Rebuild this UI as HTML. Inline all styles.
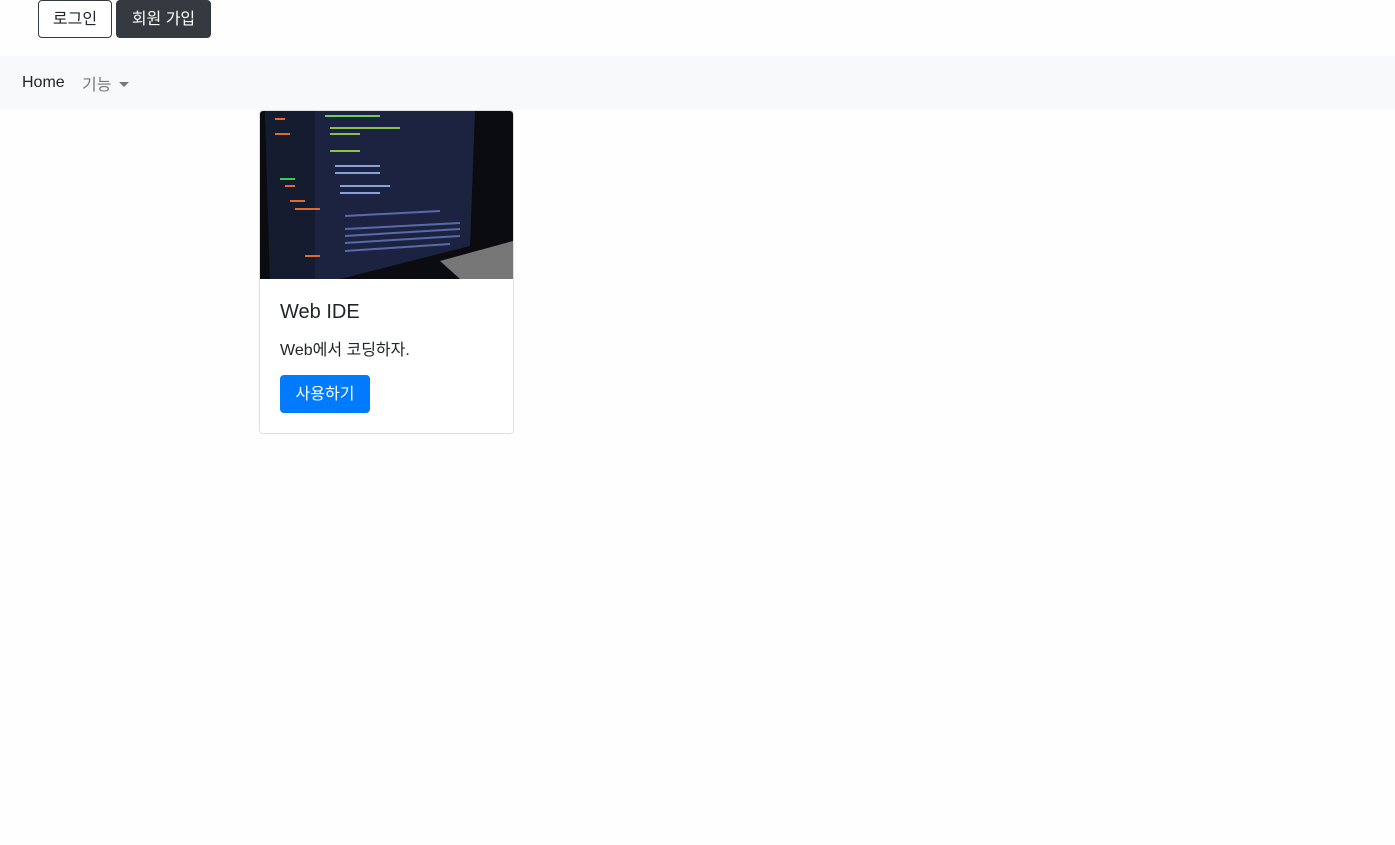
<!DOCTYPE html>
<html><head><meta charset="utf-8"><style>
*{box-sizing:border-box}
body{margin:0;background:#fefefe;font-family:"Liberation Sans","Noto Sans CJK KR",sans-serif;font-size:16px;color:#212529;width:1395px;height:845px;position:relative;overflow:hidden}
.btn{position:absolute;top:0;height:38px;border-radius:4px;font-size:16px;line-height:38px;text-align:center}
.b1{left:38px;width:74px;border:1px solid #343a40;background:#fff;color:#212529}
.b2{left:116px;width:95px;border:1px solid #343a40;background:#343a40;color:#fff}
.nav{position:absolute;top:56px;left:0;width:1395px;height:54px;background:#f8f9fa}
.nav span{position:absolute;top:17px;font-size:16px}
.card{position:absolute;left:259px;top:110px;width:255px;height:324px;border:1px solid #dfdfdf;border-radius:4px;background:#fff;overflow:hidden}
.card svg{display:block}
h5{position:absolute;left:20px;top:190px;margin:0;font-size:20px;font-weight:500}
p{position:absolute;left:20px;top:225px;margin:0;font-size:16px}
.go{position:absolute;left:20px;top:264px;width:90px;height:38px;background:#007bff;color:#fff;border-radius:4px;line-height:40px;text-align:center;font-size:16px}
</style></head><body>
<div class="btn b1">로그인</div>
<div class="btn b2">회원 가입</div>
<div class="nav"><span style="left:22px;top:18px">Home</span><span style="left:82px;top:15px;color:#777">기능 <span style="position:static;display:inline-block;border-left:5px solid transparent;border-right:5px solid transparent;border-top:5px solid #777;vertical-align:3px;margin-left:3px"></span></span></div>
<div class="card">
<svg width="253" height="168" viewBox="0 0 253 168">
<rect width="253" height="168" fill="#0b0c10"/>
<polygon points="5,0 215,0 210,135 80,168 10,168" fill="#1c2340"/>
<polygon points="5,0 55,0 55,168 10,168" fill="#161c30"/>
<g stroke-width="2">
<line x1="15" y1="8" x2="25" y2="8" stroke="#e4692e"/>
<line x1="15" y1="23" x2="30" y2="23" stroke="#e4692e"/>
<line x1="20" y1="68" x2="35" y2="68" stroke="#3dcc53"/>
<line x1="25" y1="75" x2="35" y2="75" stroke="#e4692e"/>
<line x1="30" y1="90" x2="45" y2="90" stroke="#e4692e"/>
<line x1="35" y1="98" x2="60" y2="98" stroke="#e4692e"/>
<line x1="45" y1="145" x2="60" y2="145" stroke="#e4692e"/>
<line x1="65" y1="5" x2="120" y2="5" stroke="#6bd05a"/>
<line x1="70" y1="17" x2="140" y2="17" stroke="#8bc34a"/>
<line x1="70" y1="23" x2="100" y2="23" stroke="#8bc34a"/>
<line x1="70" y1="40" x2="100" y2="40" stroke="#8bc34a"/>
<line x1="75" y1="55" x2="120" y2="55" stroke="#8aa0d8"/>
<line x1="75" y1="62" x2="120" y2="62" stroke="#8aa0d8"/>
<line x1="80" y1="75" x2="130" y2="75" stroke="#8aa0d8"/>
<line x1="80" y1="82" x2="120" y2="82" stroke="#8aa0d8"/>
<line x1="85" y1="105" x2="180" y2="100" stroke="#5a6aa8"/>
<line x1="85" y1="118" x2="200" y2="112" stroke="#5a6aa8"/>
<line x1="85" y1="125" x2="200" y2="118" stroke="#5a6aa8"/>
<line x1="85" y1="132" x2="200" y2="125" stroke="#5a6aa8"/>
<line x1="85" y1="140" x2="190" y2="133" stroke="#5a6aa8"/>
</g>
<polygon points="180,150 253,130 253,168 200,168" fill="#777"/>
</svg>
<h5>Web IDE</h5>
<p>Web에서 코딩하자.</p>
<div class="go">사용하기</div>
</div>
</body></html>
